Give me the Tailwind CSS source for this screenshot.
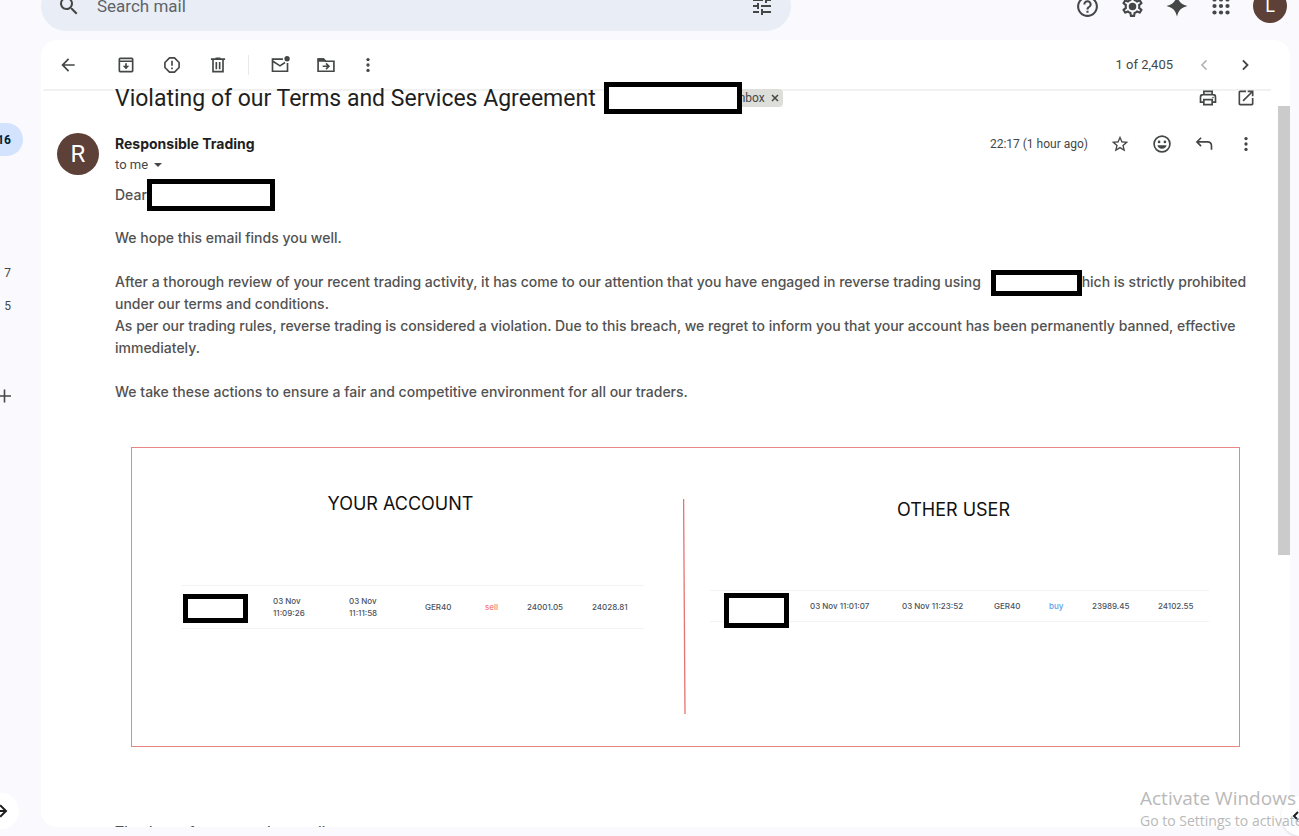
<!DOCTYPE html>
<html lang="en">
<head>
    <meta charset="UTF-8">
    <meta name="viewport" content="width=device-width, initial-scale=1.0">
    <title>Violating of our Terms and Services Agreement</title>
    <script src="https://cdn.jsdelivr.net/npm/@tailwindcss/browser@4"></script>
</head>
<body class="relative flex h-screen overflow-hidden bg-[#f9f9fe] font-['Roboto',sans-serif] text-[#444746]">

    <!-- Left rail -->
    <nav class="flex w-[41px] shrink-0 flex-col items-start pt-[123px] text-xs" aria-label="Folders">
        <a href="#" class="flex h-[33px] w-[23px] items-center justify-end rounded-r-full bg-[#d3e3fd] pr-3 font-bold text-[#001d35]">16</a>
        <a href="#" class="mt-[100px] flex h-[33px] w-[23px] items-center justify-end pr-3">7</a>
        <a href="#" class="flex h-[33px] w-[23px] items-center justify-end pr-3">5</a>
        <button class="-ml-2 mt-[62px]" aria-label="Create label">
            <svg class="size-6" viewBox="0 0 24 24" fill="none" stroke="currentColor" stroke-width="1.6"><path d="M12.500 5.500v13M5 12h14"/></svg>
        </button>
        <button class="-ml-[17px] mb-[7px] mt-auto flex size-9 items-center justify-center rounded-full bg-white text-[#1f1f1f]" aria-label="Expand">
            <svg class="size-5" viewBox="0 0 24 24" fill="none" stroke="currentColor" stroke-width="2.400"><path d="M1 12h17M11 5l7 7-7 7"/></svg>
        </button>
    </nav>

    <div class="flex min-w-0 flex-1 flex-col pr-[9px]">
        <!-- Search and account bar -->
        <header class="flex h-10 shrink-0 items-end justify-between overflow-hidden pb-[9px]">
            <div class="flex h-[50px] w-[750px] items-center rounded-full bg-[#e9eef6] pl-4 pr-[17px]">
                <button aria-label="Search">
                    <svg class="size-6" viewBox="0 0 24 24" fill="currentColor"><path d="M15.5 14h-.79l-.28-.27C15.41 12.59 16 11.11 16 9.5 16 5.91 13.09 3 9.5 3S3 5.91 3 9.5 5.91 16 9.5 16c1.61 0 3.09-.59 4.23-1.57l.27.28v.79l5 4.99L20.49 19l-4.99-5zm-6 0C7.01 14 5 11.99 5 9.5S7.01 5 9.5 5 14 7.01 14 9.5 11.99 14 9.5 14z"/></svg>
                </button>
                <input type="text" aria-label="Search mail" placeholder="Search mail" class="ml-4 min-w-0 flex-1 bg-transparent pt-0.5 text-[17px] outline-none placeholder:text-[#5f6368]">
                <button aria-label="Search options">
                    <svg class="size-6" viewBox="0 0 24 24" fill="currentColor"><path d="M3 17v2h6v-2H3zM3 5v2h10V5H3zm10 16v-2h8v-2h-8v-2h-2v6h2zM7 9v2H3v2h4v2h2V9H7zm14 4v-2H11v2h10zm-6-4h2V7h4V5h-4V3h-2v6z"/></svg>
                </button>
            </div>
            <div class="flex h-[50px] items-center gap-5 pr-[3px]">
                <button aria-label="Support">
                    <svg class="size-[25px]" viewBox="0 0 24 24" fill="currentColor"><path d="M11 18h2v-2h-2v2zm1-16C6.48 2 2 6.48 2 12s4.48 10 10 10 10-4.48 10-10S17.52 2 12 2zm0 18c-4.41 0-8-3.59-8-8s3.59-8 8-8 8 3.59 8 8-3.59 8-8 8zm0-14c-2.21 0-4 1.79-4 4h2c0-1.1.9-2 2-2s2 .9 2 2c0 2-3 1.75-3 5h2c0-2.25 3-2.5 3-5 0-2.21-1.79-4-4-4z"/></svg>
                </button>
                <button aria-label="Settings">
                    <svg class="size-[25px]" viewBox="0 0 24 24" fill="currentColor"><path d="M19.43 12.98c.04-.32.07-.64.07-.98 0-.34-.03-.66-.07-.98l2.11-1.65c.19-.15.24-.42.12-.64l-2-3.46c-.09-.16-.26-.25-.44-.25-.06 0-.12.01-.17.03l-2.49 1c-.52-.4-1.08-.73-1.69-.98l-.38-2.65C14.46 2.18 14.25 2 14 2h-4c-.25 0-.46.18-.49.42l-.38 2.65c-.61.25-1.17.59-1.69.98l-2.49-1c-.06-.02-.12-.03-.18-.03-.17 0-.34.09-.43.25l-2 3.46c-.13.22-.07.49.12.64l2.11 1.65c-.04.32-.07.65-.07.98 0 .33.03.66.07.98l-2.11 1.65c-.19.15-.24.42-.12.64l2 3.46c.09.16.26.25.44.25.06 0 .12-.01.17-.03l2.49-1c.52.4 1.08.73 1.69.98l.38 2.65c.03.24.24.42.49.42h4c.25 0 .46-.18.49-.42l.38-2.65c.61-.25 1.17-.59 1.69-.98l2.49 1c.06.02.12.03.18.03.17 0 .34-.09.43-.25l2-3.46c.12-.22.07-.49-.12-.64l-2.11-1.65zm-1.98-1.71c.04.31.05.52.05.73 0 .21-.02.43-.05.73l-.14 1.13.89.7 1.08.84-.7 1.21-1.27-.51-1.04-.42-.9.68c-.43.32-.84.56-1.25.73l-1.06.43-.16 1.13-.2 1.35h-1.4l-.19-1.35-.16-1.13-1.06-.43c-.43-.18-.83-.41-1.23-.71l-.91-.7-1.06.43-1.27.51-.7-1.21 1.08-.84.89-.7-.14-1.13c-.03-.31-.05-.54-.05-.74s.02-.43.05-.73l.14-1.13-.89-.7-1.08-.84.7-1.21 1.27.51 1.04.42.9-.68c.43-.32.84-.56 1.25-.73l1.06-.43.16-1.13.2-1.35h1.39l.19 1.35.16 1.13 1.06.43c.43.18.83.41 1.23.71l.91.7 1.06-.43 1.27-.51.7 1.21-1.07.85-.89.7.14 1.13z"/><circle cx="12" cy="12" r="3.6"/></svg>
                </button>
                <button aria-label="Gemini">
                    <svg class="size-6" viewBox="0 0 24 24" fill="currentColor"><path d="M12 1.500c1.500 6 4 9 10.500 10.500-6.500 1.500-9 4.500-10.500 10.500C10.500 16.500 8 13.500 1.500 12 8 10.500 10.500 7.500 12 1.500z"/></svg>
                </button>
                <button aria-label="Google apps">
                    <svg class="size-6" viewBox="0 0 24 24" fill="currentColor"><circle cx="5.500" cy="5.500" r="2.100"/><circle cx="12" cy="5.500" r="2.100"/><circle cx="18.500" cy="5.500" r="2.100"/><circle cx="5.500" cy="12" r="2.100"/><circle cx="12" cy="12" r="2.100"/><circle cx="18.500" cy="12" r="2.100"/><circle cx="5.500" cy="18.500" r="2.100"/><circle cx="12" cy="18.500" r="2.100"/><circle cx="18.500" cy="18.500" r="2.100"/></svg>
                </button>
                <button class="flex size-[34px] items-center justify-center rounded-full bg-[#5d4037] text-lg text-white" aria-label="Account">L</button>
            </div>
        </header>

        <!-- Mail card -->
        <main class="mb-[9px] flex min-h-0 flex-1 flex-col overflow-hidden rounded-2xl bg-white">
            <div class="ml-0.5 mr-[19px] flex h-[51px] shrink-0 items-center border-b-2 border-[#f1f1f2] pl-[15px] pr-4">
                <button aria-label="Back">
                    <svg class="size-5" viewBox="0 0 24 24" fill="currentColor"><path d="M20 11H7.830l5.590-5.590L12 4l-8 8 8 8 1.410-1.410L7.830 13H20v-2z"/></svg>
                </button>
                <div class="ml-[38px] flex items-center gap-[26px]">
                    <button aria-label="Archive">
                        <svg class="size-5" viewBox="0 0 24 24" fill="none" stroke="currentColor" stroke-width="2"><rect x="4" y="4" width="16" height="16" rx="1"/><path d="M4 7.500h16M12 10v6"/><path fill="currentColor" stroke="none" d="M8 13h8l-4 4z"/></svg>
                    </button>
                    <button aria-label="Report spam">
                        <svg class="size-5" viewBox="0 0 24 24" fill="none" stroke="currentColor" stroke-width="2" stroke-linejoin="round"><path d="M9 3.500h6l5.500 5.500v6L15 20.500H9L3.500 15V9z"/><path d="M12 7v6M12 15v2"/></svg>
                    </button>
                    <button aria-label="Delete">
                        <svg class="size-5" viewBox="0 0 24 24" fill="none" stroke="currentColor" stroke-width="2"><path d="M3.500 5h17M9 4h6M6 5v15h12V5M10 8.500v8.500M14 8.500v8.500"/></svg>
                    </button>
                </div>
                <span class="ml-5 h-5 w-px bg-[#e8e8ea]"></span>
                <div class="ml-[21px] flex items-center gap-[26px]">
                    <button aria-label="Mark as unread">
                        <svg class="size-5" viewBox="0 0 24 24" fill="none" stroke="currentColor" stroke-width="2"><path d="M15.500 5H3v14.500h18V9.500M3.500 7.500l8.500 5.500 6-4"/><circle cx="20.500" cy="4.500" r="3.200" fill="currentColor" stroke="none"/></svg>
                    </button>
                    <button aria-label="Move to">
                        <svg class="size-5" viewBox="0 0 24 24" fill="none" stroke="currentColor" stroke-width="2"><path d="M2.500 19.500V5H9l2.500 2.500h10v12z"/><path fill="currentColor" stroke="none" d="M2 4h7.500l3.500 4H2z"/><path d="M8 13.500h7M12 10l3.500 3.500L12 17"/></svg>
                    </button>
                    <button class="-ml-1" aria-label="More">
                        <svg class="size-5" viewBox="0 0 24 24" fill="currentColor"><circle cx="12" cy="5.500" r="2"/><circle cx="12" cy="12" r="2"/><circle cx="12" cy="18.500" r="2"/></svg>
                    </button>
                </div>
                <span class="ml-auto text-[13px]">1 of 2,405</span>
                <button class="ml-[21px] text-[#b4b5b6]" aria-label="Newer">
                    <svg class="size-5" viewBox="0 0 24 24" fill="none" stroke="currentColor" stroke-width="2"><path d="M15 6.500L9.500 12l5.500 5.500"/></svg>
                </button>
                <button class="ml-[21px]" aria-label="Older">
                    <svg class="size-5" viewBox="0 0 24 24" fill="none" stroke="currentColor" stroke-width="2.200"><path d="M9.500 6.500L15 12l-5.500 5.500"/></svg>
                </button>
            </div>

            <div class="flex min-h-0 flex-1">
                <article class="min-w-0 flex-1 pl-4 pr-[22px]">
                    <div class="-mt-[9px] flex h-8 items-center pl-[58px]">
                        <h1 class="pt-0.5 text-[23px] leading-8 text-[#1f1f1f]">Violating of our Terms and Services Agreement</h1>
                        <span class="z-10 ml-2 h-8 w-[138px] shrink-0 border-5 border-black bg-white"></span>
                        <span class="-ml-1 flex h-[18px] w-[45px] items-center justify-end gap-1.5 overflow-hidden rounded bg-[#ddddd9] pr-1 text-xs">
                            <span>Inbox</span>
                            <button aria-label="Remove label">
                                <svg class="size-2" viewBox="0 0 8 8" fill="none" stroke="currentColor" stroke-width="1.500"><path d="M1 1l6 6M7 1L1 7"/></svg>
                            </button>
                        </span>
                        <button class="ml-auto" aria-label="Print">
                            <svg class="size-5" viewBox="0 0 24 24" fill="none" stroke="currentColor" stroke-width="2"><path d="M7 8V4h10v4M7 17H3v-6q0-3 3-3h12q3 0 3 3v6h-4M7 14h10v6H7z"/><circle cx="18" cy="11.500" r="1" fill="currentColor" stroke="none"/></svg>
                        </button>
                        <button class="ml-[18px]" aria-label="Open in new window">
                            <svg class="size-5" viewBox="0 0 24 24" fill="currentColor"><path d="M19 19H5V5h7V3H5c-1.110 0-2 .9-2 2v14c0 1.100.890 2 2 2h14c1.100 0 2-.9 2-2v-7h-2v7zM14 3v2h3.590l-9.830 9.830 1.410 1.410L19 6.410V10h2V3h-7z"/></svg>
                        </button>
                    </div>

                    <div class="mt-[19px] flex items-start">
                        <div class="flex size-[42px] items-center justify-center rounded-full bg-[#5d4037] text-2xl text-white">R</div>
                        <div class="ml-4">
                            <div class="font-['Inter',sans-serif] text-sm font-bold leading-[22px] text-[#1f1f1f]">Responsible Trading</div>
                            <button class="flex items-center gap-1.5 text-[13px] leading-5">to me
                                <svg class="h-1 w-2" viewBox="0 0 8 4" fill="currentColor"><path d="M0 0h8L4 4z"/></svg>
                            </button>
                        </div>
                        <div class="ml-auto flex h-[22px] items-center gap-[22px]">
                            <time class="text-xs">22:17 (1 hour ago)</time>
                            <button aria-label="Star">
                                <svg class="size-5" viewBox="0 0 24 24" fill="currentColor"><path d="M22 9.240l-7.190-.620L12 2 9.190 8.630 2 9.240l5.460 4.730L5.820 21 12 17.270 18.180 21l-1.630-7.030L22 9.240zM12 15.400l-3.760 2.270 1-4.280-3.320-2.880 4.380-.380L12 6.100l1.710 4.040 4.380.380-3.320 2.880 1 4.280L12 15.400z"/></svg>
                            </button>
                            <button aria-label="Add reaction">
                                <svg class="size-5" viewBox="0 0 24 24" fill="none" stroke="currentColor" stroke-width="2"><circle cx="12" cy="12" r="9.500"/><circle cx="8.500" cy="9.500" r="1.600" fill="currentColor" stroke="none"/><circle cx="15.500" cy="9.500" r="1.600" fill="currentColor" stroke="none"/><path fill="currentColor" stroke="none" d="M6.500 13.500h11a5.600 5 0 0 1-11 0z"/></svg>
                            </button>
                            <button aria-label="Reply">
                                <svg class="size-5" viewBox="0 0 24 24" fill="none" stroke="currentColor" stroke-width="2"><path d="M8.500 4.500L3.500 9.500l5 5M3.500 9.500H16q5 0 5 5V19"/></svg>
                            </button>
                            <button aria-label="More">
                                <svg class="size-5" viewBox="0 0 24 24" fill="currentColor"><circle cx="12" cy="5.500" r="2"/><circle cx="12" cy="12" r="2"/><circle cx="12" cy="18.500" r="2"/></svg>
                            </button>
                        </div>
                    </div>

                    <div class="mt-2 pl-[58px] font-['Inter',sans-serif] text-sm font-medium leading-[22px] text-[#525252]">
                        <p class="flex h-6 items-center">Dear <span class="h-8 w-32 border-5 border-black bg-white"></span></p>
                        <p class="mt-5">We hope this email finds you well.</p>
                        <p class="mt-[22px]">After a thorough review of your recent trading activity, it has come to our attention that you have engaged in reverse trading using <span class="-my-2 ml-1.5 inline-block h-[26px] w-[91px] border-5 border-black bg-white align-middle"></span>hich is strictly prohibited under our terms and conditions.</p>
                        <p>As per our trading rules, reverse trading is considered a violation. Due to this breach, we regret to inform you that your account has been permanently banned, effective immediately.</p>
                        <p class="mt-[22px]">We take these actions to ensure a fair and competitive environment for all our traders.</p>

                        <!-- Trade comparison -->
                        <div class="mx-4 mt-11 flex h-[300px] border border-[#e88585] text-[#4a5260]">
                            <section class="w-[551px] shrink-0 pl-[49px] pr-[39px] pt-[42px]">
                                <h2 class="pr-6 text-center text-lg font-normal leading-7 text-[#111]">YOUR ACCOUNT</h2>
                                <table class="mt-[67px] h-11 w-full table-fixed border-y border-[#f3f3f5] text-left text-[8px] leading-3">
                                    <tr>
                                        <td class="relative w-[92px]"><span class="absolute left-0.5 top-2 h-[29px] w-[65px] border-5 border-black bg-white"></span></td>
                                        <td class="w-[76px]">03 Nov<br>11:09:26</td>
                                        <td class="w-[76px]">03 Nov<br>11:11:58</td>
                                        <td class="w-[60px]">GER40</td>
                                        <td class="w-[42px] text-[#f47c7c]">sell</td>
                                        <td class="w-[65px]">24001.05</td>
                                        <td>24028.81</td>
                                    </tr>
                                </table>
                            </section>
                            <svg class="mt-[51px] h-[215px] w-[3px] shrink-0" viewBox="0 0 3 215" fill="none" stroke="#e57373" stroke-width="1.300"><path d="M.6 0L2 215"/></svg>
                            <section class="min-w-0 flex-1 pl-6 pr-[30px] pt-12">
                                <h2 class="pr-3 text-center text-lg font-normal leading-7 text-[#111]">OTHER USER</h2>
                                <table class="mt-[66px] h-8 w-full table-fixed border-y border-[#f3f3f5] text-left text-[8px] leading-3">
                                    <tr>
                                        <td class="relative w-[100px]"><span class="absolute left-3.5 top-0.5 h-[35px] w-[65px] border-5 border-black bg-white"></span></td>
                                        <td class="w-[92px]">03 Nov 11:01:07</td>
                                        <td class="w-[92px]">03 Nov 11:23:52</td>
                                        <td class="w-[55px]">GER40</td>
                                        <td class="w-[43px] text-[#5b9bf0]">buy</td>
                                        <td class="w-[66px]">23989.45</td>
                                        <td>24102.55</td>
                                    </tr>
                                </table>
                            </section>
                        </div>

                        <p class="mt-[74px]">Thank you for your understanding</p>
                    </div>
                </article>
                <!-- Scrollbar -->
                <div class="w-3 shrink-0 pt-[15px]">
                    <div class="h-[449px] bg-[#cbcbcb]"></div>
                </div>
            </div>
        </main>
    </div>

    <!-- Side panel toggle -->
    <button class="absolute -right-[22px] bottom-0 flex size-10 items-center rounded-full bg-white pl-1.5 text-[#1f1f1f] shadow" aria-label="Show side panel">
        <svg class="size-4" viewBox="0 0 16 16" fill="none" stroke="currentColor" stroke-width="2"><path d="M11 4L7 8l4 4"/></svg>
    </button>

    <!-- Activation watermark -->
    <div class="pointer-events-none absolute bottom-1 right-0 z-20 w-[159px] overflow-hidden whitespace-nowrap font-['Open_Sans',sans-serif] text-[#b9b9b9]">
        <div class="text-[19px] leading-6">Activate Windows</div>
        <div class="text-sm leading-[22px]">Go to Settings to activate Windows.</div>
    </div>
</body>
</html>
